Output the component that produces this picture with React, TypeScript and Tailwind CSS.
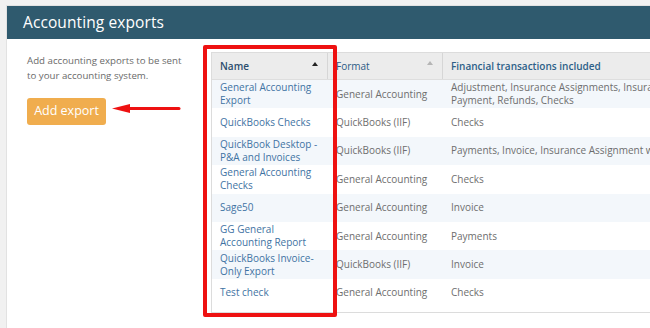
import React from 'react';

type Row = { name: string[]; format: string; tx: string[] };

const rows: Row[] = [
  { name: ['General Accounting', 'Export'], format: 'General Accounting', tx: ['Adjustment, Insurance Assignments, Insurance', 'Payment, Refunds, Checks'] },
  { name: ['QuickBooks Checks'], format: 'QuickBooks (IIF)', tx: ['Checks'] },
  { name: ['QuickBook Desktop -', 'P&A and Invoices'], format: 'QuickBooks (IIF)', tx: ['Payments, Invoice, Insurance Assignment with'] },
  { name: ['General Accounting', 'Checks'], format: 'General Accounting', tx: ['Checks'] },
  { name: ['Sage50'], format: 'General Accounting', tx: ['Invoice'] },
  { name: ['GG General', 'Accounting Report'], format: 'General Accounting', tx: ['Payments'] },
  { name: ['QuickBooks Invoice-', 'Only Export'], format: 'QuickBooks (IIF)', tx: ['Invoice'] },
  { name: ['Test check'], format: 'General Accounting', tx: ['Checks'] },
];

const Lines: React.FC<{ lines: string[] }> = ({ lines }) => (
  <div className="flex flex-col justify-center leading-[13px]">
    {lines.map((l) => (
      <span key={l} className="whitespace-nowrap">{l}</span>
    ))}
  </div>
);

export default function App() {
  return (
    <div
      className="relative w-[650px] h-[328px] overflow-hidden bg-[#f1f1f1] pt-[5px] pl-[6px]"
      style={{ fontFamily: '"Open Sans", "Liberation Sans", sans-serif' }}
    >
      <div className="h-[340px] bg-white border-l border-t border-[#e2e2e2] overflow-hidden">
        <div className="h-[33px] bg-[#2f5a6e] pl-4 flex items-center text-white text-[15.5px] tracking-[0.1px]">
          Accounting exports
        </div>
        <div className="flex">
          <div className="w-[204px] shrink-0 pl-5 pt-[14px]">
            <p className="text-[9.7px] leading-[15px] text-[#6a6a6a]">
              Add accounting exports to be sent
              <br />
              to your accounting system.
            </p>
            <button className="mt-[15px] h-[27px] w-[79px] rounded-[3px] bg-[#f0ad4e] text-white text-[12.5px]">
              Add export
            </button>
          </div>

          <div className="mt-[13px] w-[520px] shrink-0 border-l border-t border-[#dcdcdc] text-[10px]">
            <div className="grid grid-cols-[116px_115px_1fr] h-[27px] bg-[#ececec] border-b border-[#dedede]">
              <div className="relative flex items-center pl-[8px] border-r border-[#d6d6d6] text-[#2b4d6e] font-semibold">
                Name
                <span className="absolute right-[9px] top-[9px] w-0 h-0 border-l-[3px] border-r-[3px] border-b-[4px] border-l-transparent border-r-transparent border-b-[#222]" />
              </div>
              <div className="relative flex items-center pl-[8px] border-r border-[#d6d6d6] text-[#2d5b85]">
                Format
                <span className="absolute right-[9px] top-[8px] w-0 h-0 border-l-[3px] border-r-[3px] border-b-[4px] border-l-transparent border-r-transparent border-b-[#b5b5b5]" />
              </div>
              <div className="flex items-center pl-[8px] text-[#2d5f88] font-semibold">
                Financial transactions included
              </div>
            </div>
            {rows.map((r, i) => (
              <div
                key={r.name.join(' ')}
                className={`grid grid-cols-[116px_115px_1fr] h-[28.4px] ${i % 2 === 0 ? 'bg-[#f3f7fb]' : 'bg-white'}`}
              >
                <div className="flex items-center pl-[8px] text-[#3f73a3]">
                  <Lines lines={r.name} />
                </div>
                <div className="flex items-center pl-[8px] text-[#6e6e6e]">
                  <span className="whitespace-nowrap">{r.format}</span>
                </div>
                <div className="flex items-center pl-[8px] text-[#6e6e6e]">
                  <Lines lines={r.tx} />
                </div>
              </div>
            ))}
            <div className="h-[6px] border-b border-[#dcdcdc]" />
          </div>
        </div>
      </div>

      {/* annotation: red box around name column */}
      <div className="absolute left-[203px] top-[45px] w-[134px] h-[272px] border-[4px] border-[#ee1111] rounded-[2px]" />

      {/* annotation: arrow pointing at button */}
      <svg className="absolute left-[112px] top-[103px]" width="70" height="12" viewBox="0 0 70 12">
        <polygon points="0,5.5 18,1 18,10" fill="#ee1111" />
        <line x1="16" y1="5.5" x2="67" y2="5.5" stroke="#ee1111" strokeWidth="3" strokeLinecap="round" />
      </svg>
    </div>
  );
}
